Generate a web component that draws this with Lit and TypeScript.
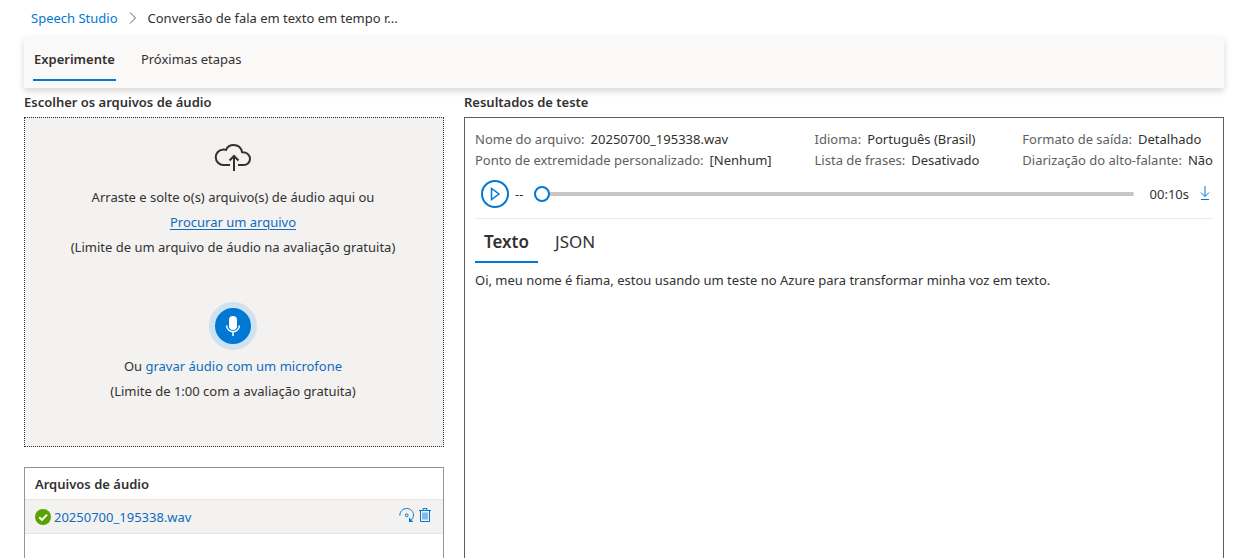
import { LitElement, html, css } from "lit";
import { customElement, state } from "lit/decorators.js";

interface Detail {
  label: string;
  value: string;
}

const FILE_NAME = "20250700_195338.wav";

const DETAILS: Detail[][] = [
  [
    { label: "Nome do arquivo:", value: FILE_NAME },
    { label: "Ponto de extremidade personalizado:", value: "[Nenhum]" },
  ],
  [
    { label: "Idioma:", value: "Português (Brasil)" },
    { label: "Lista de frases:", value: "Desativado" },
  ],
  [
    { label: "Formato de saída:", value: "Detalhado" },
    { label: "Diarização do alto-falante:", value: "Não" },
  ],
];

@customElement("app-root")
export class AppRoot extends LitElement {
  @state() private resultTab = "Texto";
  @state() private position = "0";

  static styles = css`
    :host {
      display: flex;
      flex-direction: column;
      box-sizing: border-box;
      min-height: 100vh;
      padding: 0 36px 0 24px;
      background: #fff;
      color: #323130;
      font-family: "Segoe UI", "Noto Sans", "Open Sans", sans-serif;
      font-size: 13px;
      line-height: 20px;
    }
    * {
      box-sizing: border-box;
    }
    h2,
    p,
    dl,
    dd,
    ul {
      margin: 0;
      padding: 0;
    }
    h2 {
      font-size: 13px;
      font-weight: 600;
    }
    button {
      padding: 0;
      border: 0;
      background: none;
      color: inherit;
      font: inherit;
      cursor: pointer;
    }
    a {
      color: #0f6cbd;
      text-decoration: none;
    }
    svg {
      display: block;
      fill: none;
      stroke: currentColor;
    }
    .breadcrumb {
      display: flex;
      align-items: center;
      gap: 10px;
      height: 37px;
      padding: 0 0 2px 7px;
    }
    .breadcrumb a {
      color: #0078d4;
    }
    .chevron {
      color: #605e5c;
    }
    .bar {
      display: flex;
      gap: 24px;
      height: 51px;
      padding: 0 9px;
      background: #faf9f8;
      box-shadow: 0 3px 7px rgba(0, 0, 0, 0.17);
    }
    .bar-tab {
      height: 44px;
      padding: 2px 1px 0;
      border-bottom: 2px solid transparent;
    }
    .tab-active {
      border-bottom-color: #0078d4;
      font-weight: 600;
    }
    .columns {
      display: grid;
      grid-template-columns: 420px minmax(0, 1fr);
      gap: 20px;
      flex: 1;
      padding-top: 4px;
    }
    .column {
      display: flex;
      flex-direction: column;
      gap: 5px;
    }
    .drop {
      display: flex;
      flex-direction: column;
      align-items: center;
      height: 330px;
      padding: 24px 2px 0 0;
      border: 1px dotted #323130;
      background: #f3f2f1;
      text-align: center;
    }
    .lines {
      line-height: 25px;
    }
    .cloud {
      margin-bottom: 13px;
    }
    .browse {
      text-decoration: underline;
      text-underline-offset: 2px;
    }
    .mic {
      display: grid;
      place-items: center;
      width: 48px;
      height: 48px;
      margin: 42px 0 4px;
      border: 6px solid #d0e1ef;
      border-radius: 50%;
      background: #0078d4;
      color: #fff;
    }
    .files {
      flex: 1;
      margin-top: 15px;
      border: 1px solid #979593;
      border-bottom: 0;
    }
    .files h2 {
      padding: 6px 10px 5px;
    }
    .file {
      display: flex;
      align-items: center;
      gap: 3px;
      height: 35px;
      padding: 0 11px 0 10px;
      border: solid #e8e6e4;
      border-width: 1px 0;
      background: #f3f2f1;
      list-style: none;
    }
    .file a {
      flex: 1;
    }
    .icon-button {
      color: #0078d4;
    }
    .file .icon-button {
      padding-bottom: 3px;
    }
    .result {
      flex: 1;
      padding: 11px 10px;
      border: 1px solid #605e5c;
      border-bottom: 0;
    }
    .details {
      display: flex;
      justify-content: space-between;
      flex-wrap: wrap;
    }
    .detail {
      display: flex;
      gap: 6px;
      line-height: 21px;
    }
    .detail dt {
      color: #605e5c;
    }
    .player {
      display: flex;
      align-items: center;
      height: 48px;
      padding: 0 3px 2px 6px;
      border-bottom: 1px solid #edebe9;
    }
    .play {
      display: grid;
      place-items: center;
      width: 28px;
      height: 28px;
      margin-right: 6px;
      border: 2px solid #0078d4;
      border-radius: 50%;
      color: #0078d4;
    }
    .seek {
      flex: 1;
      min-width: 0;
      height: 16px;
      margin: 0 16px 0 11px;
      background: linear-gradient(#c8c6c4, #c8c6c4) center / 100% 4px no-repeat;
      appearance: none;
      -webkit-appearance: none;
    }
    .seek::-webkit-slider-thumb {
      appearance: none;
      -webkit-appearance: none;
      box-sizing: border-box;
      width: 16px;
      height: 16px;
      border: 2px solid #0078d4;
      border-radius: 50%;
      background: #fff;
    }
    .download {
      margin-left: 11px;
      padding-bottom: 2px;
    }
    .result-tabs {
      display: flex;
      gap: 8px;
    }
    .result-tab {
      height: 44px;
      padding: 3px 9px 0;
      border-bottom: 2px solid transparent;
      font-size: 17px;
    }
    .result-tab.tab-active {
      border-bottom-color: #0078d4;
    }
    .transcript {
      padding-top: 7px;
    }
  `;

  private renderResultTab(name: string) {
    const active = this.resultTab === name;
    return html`<button
      class="result-tab ${active ? "tab-active" : ""}"
      role="tab"
      aria-selected=${active}
      @click=${() => (this.resultTab = name)}
    >${name}</button>`;
  }

  render() {
    return html`
      <nav class="breadcrumb" aria-label="Navegação">
        <a href="#">Speech Studio</a>
        <svg class="chevron" width="10" height="12" viewBox="0 0 10 12"><path d="M2 0.5 7.5 6 2 11.5" /></svg>
        <span>Conversão de fala em texto em tempo r...</span>
      </nav>
      <div class="bar" role="tablist">
        <button class="bar-tab tab-active" role="tab" aria-selected="true">Experimente</button>
        <button class="bar-tab" role="tab" aria-selected="false">Próximas etapas</button>
      </div>
      <main class="columns">
        <section class="column">
          <h2>Escolher os arquivos de áudio</h2>
          <div class="drop">
            <svg class="cloud" width="38" height="30" viewBox="0 0 38 30" stroke-width="2">
              <path d="M16 23H9.500a7.500 7.500 0 0 1 0-15.500q1.300 0 2.500.400C13.500 4.600 16.200 3 19.500 3c4.500 0 7.700 2.800 8.600 7.300 4.500-.300 7.900 2.500 7.900 6.400 0 3.600-2.800 6.300-6.300 6.300H24" />
              <path d="M20 29V14.500M15.500 18.500l4.500-4.500 4.500 4.500" />
            </svg>
            <div class="lines">
              <p>Arraste e solte o(s) arquivo(s) de áudio aqui ou</p>
              <p><a class="browse" href="#">Procurar um arquivo</a></p>
              <p>(Limite de um arquivo de áudio na avaliação gratuita)</p>
            </div>
            <button class="mic" aria-label="Gravar">
              <svg width="16" height="20" viewBox="0 0 16 20" stroke-width="1.500">
                <rect x="4" y="0" width="8" height="14" rx="4" fill="currentColor" stroke="none" />
                <path d="M1.700 9.500v.500a6.300 5.700 0 0 0 12.600 0v-.500M8 15.700V20" />
              </svg>
            </button>
            <div class="lines">
              <p>Ou <a href="#">gravar áudio com um microfone</a></p>
              <p>(Limite de 1:00 com a avaliação gratuita)</p>
            </div>
          </div>
          <div class="files">
            <h2>Arquivos de áudio</h2>
            <ul>
              <li class="file">
                <svg width="16" height="16" viewBox="0 0 16 16">
                  <circle cx="8" cy="8" r="8" fill="#57a300" stroke="none" />
                  <path d="M4.200 8.200 7 10.900l5-5.300" stroke="#fff" stroke-width="2" />
                </svg>
                <a href="#">${FILE_NAME}</a>
                <button class="icon-button" aria-label="Repetir">
                  <svg width="16" height="16" viewBox="0 0 16 16">
                    <path d="M.800 8.500C.800 4.500 3.800 1.500 7.700 1.500c3.800 0 6.800 2.900 6.800 6.400 0 2-.800 3.600-2.300 4.900" />
                    <path d="M10 10.500v4.500h4.300Z" fill="currentColor" stroke="none" />
                    <circle cx="7.700" cy="8.300" r="1.400" />
                  </svg>
                </button>
                <button class="icon-button" aria-label="Excluir">
                  <svg width="14" height="16" viewBox="0 0 14 16">
                    <path d="M1 3.500h12M2.500 3.500v11h9v-11M5 3.500v-2h4v2" />
                    <path d="M5 5.500v7M7 5.500v7M9 5.500v7" stroke-width=".900" />
                  </svg>
                </button>
              </li>
            </ul>
          </div>
        </section>
        <section class="column">
          <h2>Resultados de teste</h2>
          <div class="result">
            <div class="details">
              ${DETAILS.map(
                (group) => html`<dl>
                  ${group.map((d) => html`<div class="detail"><dt>${d.label}</dt><dd>${d.value}</dd></div>`)}
                </dl>`
              )}
            </div>
            <div class="player">
              <button class="play" aria-label="Reproduzir">
                <svg width="12" height="14" viewBox="0 0 12 14" stroke-width="1.500"><path d="M2.500 1.500v11L10 7Z" /></svg>
              </button>
              <span>--</span>
              <input
                class="seek"
                type="range"
                min="0"
                max="10"
                aria-label="Posição do áudio"
                .value=${this.position}
                @input=${(e: Event) => (this.position = (e.target as HTMLInputElement).value)}
              />
              <span>00:10s</span>
              <button class="icon-button download" aria-label="Baixar">
                <svg width="10" height="16" viewBox="0 0 10 16"><path d="M5 1v10.500M1 7.500l4 4 4-4M1 14.500h8" /></svg>
              </button>
            </div>
            <div class="result-tabs" role="tablist">
              ${this.renderResultTab("Texto")}${this.renderResultTab("JSON")}
            </div>
            <p class="transcript">Oi, meu nome é fiama, estou usando um teste no Azure para transformar minha voz em texto.</p>
          </div>
        </section>
      </main>
    `;
  }
}
